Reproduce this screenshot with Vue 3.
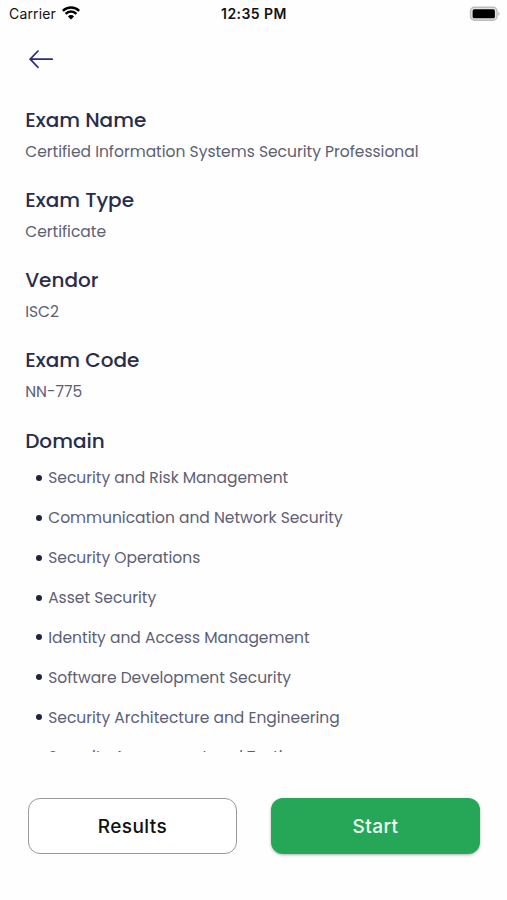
<template>
  <div class="screen">
    <div class="status-bar">
      <div class="carrier">
        <span>Carrier</span>
        <svg width="18" height="14" viewBox="0 0 18 14">
          <path d="M0.8 4.9 A11.8 11.8 0 0 1 17.2 4.9" />
          <path d="M3.6 7.8 A7.7 7.7 0 0 1 14.4 7.8" />
          <path class="wifi-dot" d="M9 13.6 L5.9 10.4 A4.4 4.4 0 0 1 12.1 10.4 Z" />
        </svg>
      </div>
      <span class="time">12:35 PM</span>
      <div class="battery-wrap">
        <svg width="32" height="16" viewBox="0 0 32 16">
          <rect x="1.5" y="1.2" width="26.5" height="13" rx="4" fill="#e4e4e4" stroke="#bcbcbc" stroke-width="1.4" />
          <rect x="3.6" y="3.3" width="22.3" height="9" rx="1.6" fill="#000" />
          <path d="M29.4 5.4 Q32 7.7 29.4 10 Z" fill="#b4b4b4" />
        </svg>
      </div>
    </div>

    <button class="back" aria-label="Back">
      <svg width="26" height="20" viewBox="0 0 26 20">
        <path d="M24.2 10.2 H2 M10 2 L2.2 10.2 L10 18.4" />
      </svg>
    </button>

    <main class="content">
      <section v-for="field in fields" :key="field.label" class="field">
        <h2>{{ field.label }}</h2>
        <p>{{ field.value }}</p>
      </section>
      <section>
        <h2>Domain</h2>
        <ul>
          <li v-for="domain in domains" :key="domain">{{ domain }}</li>
        </ul>
      </section>
    </main>

    <footer class="actions">
      <button class="btn outline">Results</button>
      <button class="btn primary">Start</button>
    </footer>
  </div>
</template>

<script setup>
const fields = [
  { label: 'Exam Name', value: 'Certified Information Systems Security Professional' },
  { label: 'Exam Type', value: 'Certificate' },
  { label: 'Vendor', value: 'ISC2' },
  { label: 'Exam Code', value: 'NN-775' }
]

const domains = [
  'Security and Risk Management',
  'Communication and Network Security',
  'Security Operations',
  'Asset Security',
  'Identity and Access Management',
  'Software Development Security',
  'Security Architecture and Engineering',
  'Security Assessment and Testing'
]
</script>

<style>
body {
  margin: 0;
  background: #fefefe;
}
</style>

<style scoped>
.screen {
  height: 900px;
  display: flex;
  flex-direction: column;
  overflow: hidden;
  background: #fefefe;
  font-family: Poppins, Inter, "Liberation Sans", sans-serif;
}

.status-bar {
  height: 27px;
  padding: 0 6px 0 9px;
  display: grid;
  grid-template-columns: 1fr auto 1fr;
  align-items: center;
  font-family: Inter, sans-serif;
  font-size: 14px;
  color: #111;
  box-sizing: border-box;
}

.carrier {
  display: flex;
  align-items: center;
  gap: 6px;
  letter-spacing: 0.15px;
}

.carrier svg {
  margin-top: -1px;
}

.carrier path {
  fill: none;
  stroke: #000;
  stroke-width: 2.5;
}

.carrier .wifi-dot {
  fill: #000;
  stroke: none;
}

.time {
  margin-left: -2px;
  font-weight: 600;
  letter-spacing: 0.45px;
}

.battery-wrap {
  display: flex;
  justify-content: flex-end;
}

.back {
  align-self: flex-start;
  margin: 22px 0 0 28px;
  padding: 0;
  border: none;
  background: none;
  height: 20px;
}

.back svg {
  display: block;
}

.back path {
  fill: none;
  stroke: #302c78;
  stroke-width: 1.7;
  stroke-linecap: round;
  stroke-linejoin: round;
}

.content {
  height: 648px;
  margin-top: 35px;
  padding-left: 25.2px;
  overflow: hidden;
}

h2 {
  margin: 0;
  font-size: 20px;
  font-weight: 500;
  line-height: 32px;
  color: #2a2d49;
}

.field {
  height: 80.15px;
}

p {
  margin: 0;
  font-size: 15.5px;
  line-height: 31px;
  color: #5d6073;
}

ul {
  list-style: none;
  margin: 1.5px 0 0;
  padding: 0 0 0 10.8px;
}

li {
  display: flex;
  align-items: center;
  gap: 6.2px;
  height: 39.85px;
  font-size: 15.5px;
  color: #5d6073;
  white-space: nowrap;
}

li::before {
  content: "";
  width: 6px;
  height: 6px;
  border-radius: 50%;
  background: #20243f;
}

.actions {
  display: grid;
  grid-template-columns: 209px 209px;
  gap: 34px;
  margin: 46px 0 0 28px;
}

.btn {
  height: 56px;
  border: none;
  border-radius: 12px;
  font-family: Inter, sans-serif;
  font-size: 19px;
  font-weight: 500;
  letter-spacing: 0.4px;
}

.outline {
  background: #fff;
  border: 1.5px solid #999;
  color: #111;
}

.primary {
  background: #26a657;
  color: #f1fff5;
  box-shadow: 0 1px 3px rgba(0, 0, 0, 0.3);
}
</style>
